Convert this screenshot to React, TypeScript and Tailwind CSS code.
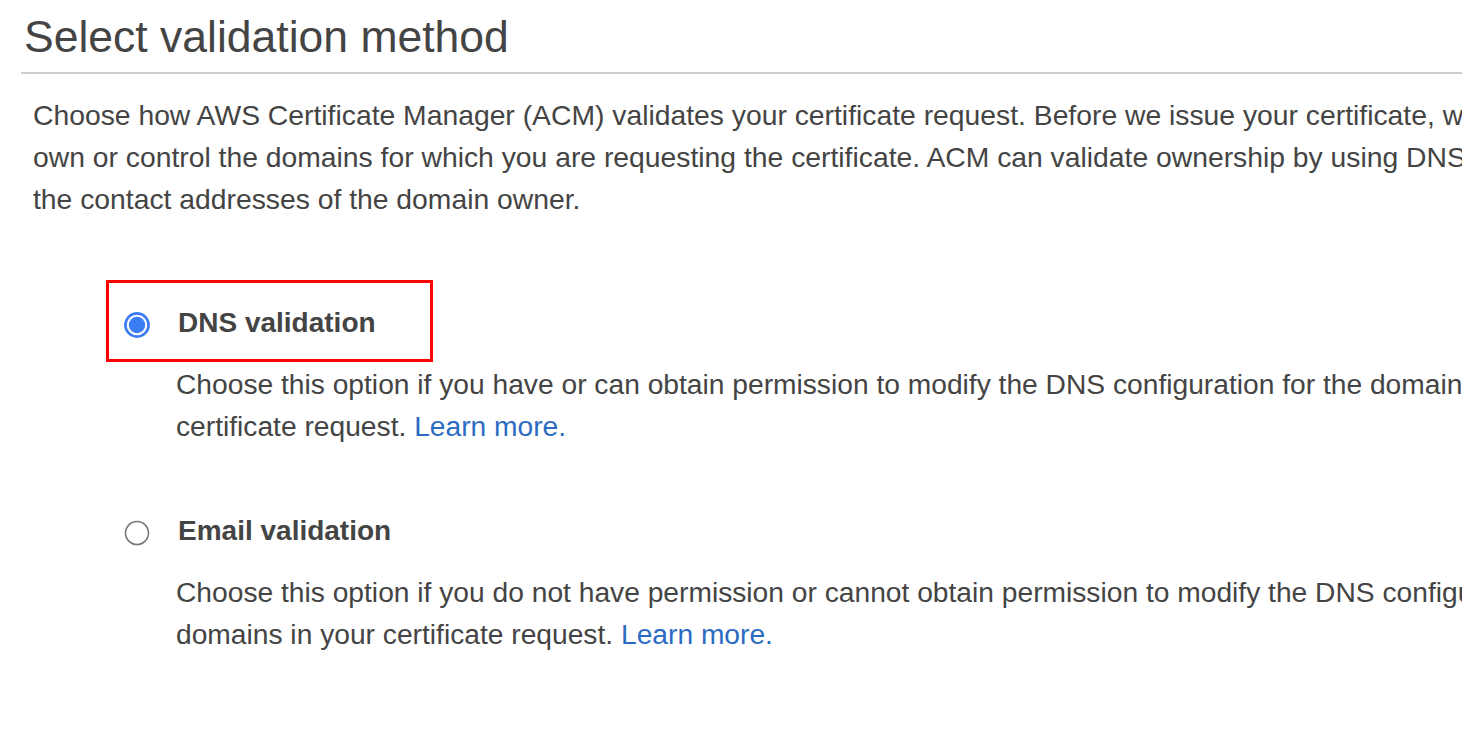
import React from "react";

function Radio({ checked }: { checked: boolean }) {
  return (
    <svg width="26" height="26" viewBox="0 0 26 26" className="mt-[10px] shrink-0">
      {checked ? (
        <>
          <circle cx="13" cy="13" r="11.6" fill="white" stroke="#3b7cf5" strokeWidth="2.6" />
          <circle cx="13" cy="13" r="8.2" fill="#3b7cf5" />
        </>
      ) : (
        <circle cx="13" cy="13" r="11.5" fill="white" stroke="#767676" strokeWidth="1.6" />
      )}
    </svg>
  );
}

function Option({
  checked,
  label,
  lines,
  highlight,
  className,
}: {
  checked: boolean;
  label: string;
  lines: [string, string];
  highlight?: boolean;
  className?: string;
}) {
  return (
    <div className={"pl-[124px] " + (className ?? "")}>
      <div className="relative flex h-[42px] items-start">
        {highlight && (
          <span className="pointer-events-none absolute left-[-18px] top-[-22px] h-[82px] w-[327px] border-[3px] border-[#ff0000]" />
        )}
        <Radio checked={checked} />
        <span className="ml-[28px] text-[28px] font-bold leading-[42px]">{label}</span>
      </div>
      <p className="ml-[52px] mt-[19px] whitespace-nowrap text-[28.2px] leading-[42px]">
        {lines[0]}
        <br />
        {lines[1]} <a className="text-[#2c6bc2]">Learn more.</a>
      </p>
    </div>
  );
}

export default function App() {
  return (
    <div className="h-[754px] w-[1462px] overflow-hidden bg-white text-[#444] [font-family:'Liberation_Sans',Arial,Helvetica,sans-serif]">
      <div className="pl-[21px]">
        <h1 className="whitespace-nowrap border-b-2 border-[#cdcdcd] pb-[10px] pl-[3px] pt-[12px] text-[44.5px] font-normal leading-[50px]">
          Select validation method
        </h1>
      </div>
      <p className="mt-[20px] whitespace-nowrap pl-[33px] text-[28.3px] leading-[42px]">
        Choose how AWS Certificate Manager (ACM) validates your certificate request. Before we issue your certificate, we need to verify that you
        <br />
        own or control the domains for which you are requesting the certificate. ACM can validate ownership by using DNS or by sending email to
        <br />
        the contact addresses of the domain owner.
      </p>
      <Option
        className="mt-[82px]"
        checked
        highlight
        label="DNS validation"
        lines={[
          "Choose this option if you have or can obtain permission to modify the DNS configuration for the domains in your",
          "certificate request.",
        ]}
      />
      <Option
        className="mt-[63px]"
        checked={false}
        label="Email validation"
        lines={[
          "Choose this option if you do not have permission or cannot obtain permission to modify the DNS configuration for the",
          "domains in your certificate request.",
        ]}
      />
    </div>
  );
}
